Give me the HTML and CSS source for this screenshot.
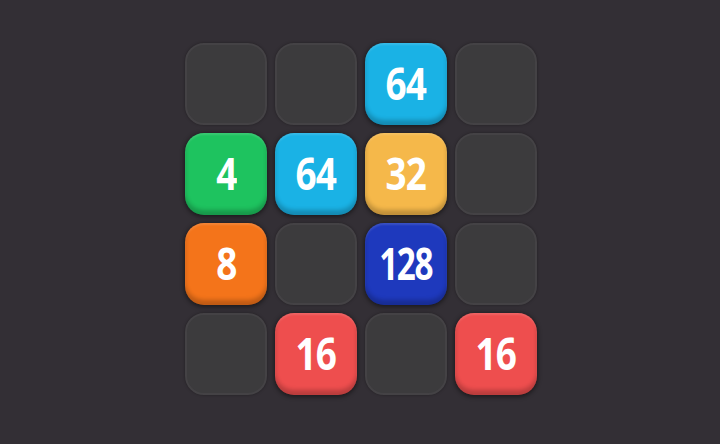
FILE: index.html
```html
<!DOCTYPE html>
<html>
<head>
<meta charset="utf-8">
<link rel="stylesheet" href="styles.css">
</head>
<body>
<div class="board">
  <div class="cell"></div>
  <div class="cell"></div>
  <div class="cell tile blue"><span class="num">64</span></div>
  <div class="cell"></div>

  <div class="cell tile green"><span class="num">4</span></div>
  <div class="cell tile blue"><span class="num">64</span></div>
  <div class="cell tile yellow"><span class="num">32</span></div>
  <div class="cell"></div>

  <div class="cell tile orange"><span class="num">8</span></div>
  <div class="cell"></div>
  <div class="cell tile navy"><span class="num three">128</span></div>
  <div class="cell"></div>

  <div class="cell"></div>
  <div class="cell tile red"><span class="num">16</span></div>
  <div class="cell"></div>
  <div class="cell tile red"><span class="num">16</span></div>
</div>
</body>
</html>
```
FILE: styles.css
```css
html, body {
  margin: 0;
  padding: 0;
  background: #332f35;
  width: 720px;
  height: 444px;
  overflow: hidden;
}
.board {
  display: grid;
  grid-template-columns: repeat(4, 82px);
  grid-template-rows: repeat(4, 82px);
  gap: 8px;
  padding-top: 43px;
  padding-left: 185px;
}
.cell {
  box-sizing: border-box;
  border-radius: 19px;
  background: #3c3b3d;
  border: 2px solid #444245;
  box-shadow: 0 0 3px rgba(0,0,0,0.35);
}
.tile {
  border: none;
  display: flex;
  align-items: center;
  justify-content: center;
  color: #fff;
  font-family: "Open Sans", sans-serif;
  font-weight: 700;
  box-shadow: inset 0 -5px 4px rgba(0,0,0,0.22), inset 0 2px 2px rgba(255,255,255,0.12), 0 1px 4px 1px rgba(0,0,0,0.45);
}
.num {
  display: inline-block;
  font-size: 45px;
  line-height: 1;
  letter-spacing: -1px;
  transform: scaleX(0.82);
  margin-top: -4px;
}
.num.three {
  letter-spacing: -2px;
  transform: scaleX(0.74);
}
.blue { background: #1ab2e5; }
.green { background: #1ec35f; }
.yellow { background: #f5b84a; }
.orange { background: #f4741a; }
.navy { background: #1e39bd; }
.red { background: #ee4e4e; }
```
